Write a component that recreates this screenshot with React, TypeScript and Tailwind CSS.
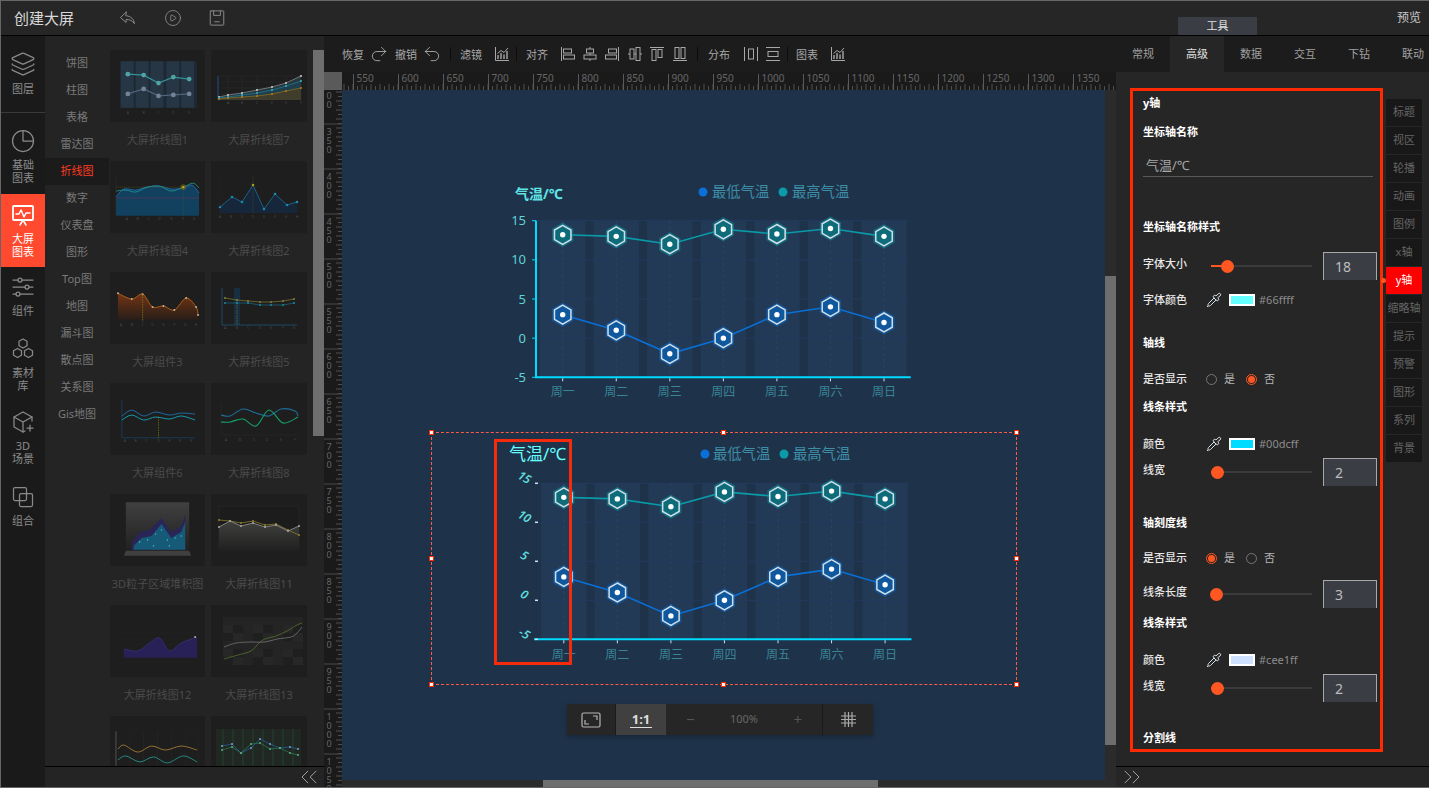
import { Pipette, Layers, CirclePlay, ChevronsLeft, ChevronsRight, Undo2, Redo2 } from 'lucide-react';

type Pt = [number, number];

const smooth = (pts: Pt[]) => {
  let d = `M${pts[0][0]} ${pts[0][1]}`;
  for (let i = 0; i < pts.length - 1; i++) {
    const p0 = pts[i - 1] || pts[i];
    const p1 = pts[i];
    const p2 = pts[i + 1];
    const p3 = pts[i + 2] || p2;
    d += ` C${p1[0] + (p2[0] - p0[0]) / 6} ${p1[1] + (p2[1] - p0[1]) / 6} ${p2[0] - (p3[0] - p1[0]) / 6} ${p2[1] - (p3[1] - p1[1]) / 6} ${p2[0]} ${p2[1]}`;
  }
  return d;
};
const straight = (pts: Pt[]) => pts.map((p, i) => `${i ? 'L' : 'M'}${p[0]} ${p[1]}`).join(' ');
const zip = (xs: number[], ys: number[]) => xs.map((x, i) => [x, ys[i]] as Pt);

function Line({ pts, color, w = 1, curve, dot }: { pts: Pt[]; color: string; w?: number; curve?: boolean; dot?: string }) {
  return (
    <g>
      <path d={curve ? smooth(pts) : straight(pts)} fill="none" stroke={color} strokeWidth={w} />
      {dot && pts.map((p, i) => <circle key={i} cx={p[0]} cy={p[1]} r="1" fill={dot} />)}
    </g>
  );
}

function Area({ pts, base, fill, curve }: { pts: Pt[]; base: number; fill: string; curve?: boolean }) {
  const d = `${curve ? smooth(pts) : straight(pts)} L${pts[pts.length - 1][0]} ${base} L${pts[0][0]} ${base} Z`;
  return <path d={d} fill={fill} />;
}

function Letters({ xs, y, text }: { xs: number[]; y: number; text: string }) {
  return (
    <g fontSize="3.5" fill="#555">
      {xs.map((x, i) => <text key={i} x={x} y={y} textAnchor="middle">{text[i]}</text>)}
    </g>
  );
}

const cards: { name: string; art: React.ReactNode }[] = [
  {
    name: '大屏折线图1',
    art: (
      <g>
        <rect x="10" y="11" width="78" height="47" fill="#1f2c38" />
        {[11, 26, 41, 57, 72].map((x) => <rect key={x} x={x} y="11" width="13" height="47" fill="#2a3d50" />)}
        <Line pts={zip([18, 34, 49, 64, 80], [24, 25, 33, 27, 29])} color="#35b4b8" w={1.2} />
        <Line pts={zip([18, 34, 49, 64, 80], [44, 39, 46, 45, 44])} color="#5d7898" w={1.2} />
        {[[18, 24], [34, 25], [49, 33], [64, 27], [80, 29]].map((p) => <circle key={p[0]} cx={p[0]} cy={p[1]} r="2.4" fill="#5fc9c9" />)}
        {[[18, 44], [34, 39], [49, 46], [64, 45], [80, 44]].map((p) => <circle key={p[0]} cx={p[0]} cy={p[1]} r="2.4" fill="#8d9fbb" />)}
        <Letters xs={[18, 34, 49, 64, 80]} y={64} text="ABCDE" />
      </g>
    ),
  },
  {
    name: '大屏折线图7',
    art: (
      <g>
        {[17, 31, 46, 61, 75, 90].map((x) => <line key={x} x1={x} y1="26" x2={x} y2="50" stroke="#333" strokeWidth=".5" />)}
        {[26, 32, 38, 44].map((y) => <line key={y} x1="7" y1={y} x2="90" y2={y} stroke="#333" strokeWidth=".5" />)}
        <line x1="7" y1="26" x2="7" y2="50" stroke="#1d5fa8" />
        <Area pts={zip([8, 17, 31, 46, 61, 75, 90], [47, 45, 43, 40, 37, 33, 26])} base={50} fill="#2c3e45" />
        <Area pts={zip([8, 17, 31, 46, 61, 75, 90], [48, 47, 45, 43, 40, 36, 31])} base={50} fill="#1f4a5c" />
        <Area pts={zip([8, 17, 31, 46, 61, 75, 90], [49, 48, 47, 46, 44, 41, 38])} base={50} fill="#4a4630" />
        <Line pts={zip([8, 17, 31, 46, 61, 75, 90], [47, 45, 43, 40, 37, 33, 26])} color="#a9b9bd" w={0.7} dot="#fff" />
        <Line pts={zip([8, 17, 31, 46, 61, 75, 90], [48, 47, 45, 43, 40, 36, 31])} color="#1e9cc0" w={0.7} dot="#3ed3ec" />
        <Line pts={zip([8, 17, 31, 46, 61, 75, 90], [49, 48, 47, 46, 44, 41, 38])} color="#b68a1f" w={0.7} dot="#e09a16" />
        <Letters xs={[17, 31, 46, 61, 75, 90]} y={54} text="ABCDEF" />
      </g>
    ),
  },
  {
    name: '大屏折线图4',
    art: (
      <g>
        <Area pts={zip([6, 14, 26, 37, 50, 62, 74, 83, 90], [36, 28, 29, 26, 25, 28, 27, 24, 32])} base={55} fill="#0e4c70" curve />
        <Line pts={zip([6, 14, 26, 37, 50, 62, 74, 83, 90], [36, 28, 29, 26, 25, 28, 27, 24, 32])} color="#2284e6" w={0.9} curve />
        <Line pts={zip([6, 16, 26, 38, 50, 62, 74, 84, 90], [30, 29, 31, 26, 25, 30, 26, 22, 27])} color="#21b0a6" w={0.9} curve />
        <line x1="6" y1="26" x2="74" y2="26" stroke="#8a7f1c" strokeWidth=".5" strokeDasharray="1 1" />
        <line x1="6" y1="37" x2="90" y2="37" stroke="#a02f6a" strokeWidth=".5" />
        <line x1="74" y1="26" x2="74" y2="55" stroke="#3c7a50" strokeWidth=".5" strokeDasharray="1 1" />
        <circle cx="74" cy="26" r="3" fill="#8f7b16" opacity=".6" />
        <circle cx="74" cy="26" r="1.2" fill="#f4d316" />
        <line x1="6" y1="16" x2="6" y2="55" stroke="#3a3a2a" strokeWidth=".5" />
        <Letters xs={[17, 28, 39, 50, 62, 74, 85]} y={59} text="ABCDEFG" />
      </g>
    ),
  },
  {
    name: '大屏折线图2',
    art: (
      <g>
        <Area pts={zip([9, 21, 31, 42, 53, 64, 76, 86], [46, 36, 41, 24, 48, 33, 44, 41])} base={52} fill="#152a44" />
        <Line pts={zip([9, 21, 31, 42, 53, 64, 76, 86], [46, 36, 41, 24, 48, 33, 44, 41])} color="#1a87b8" w={0.8} />
        {zip([9, 21, 31, 53, 64, 76, 86], [46, 36, 41, 48, 33, 44, 41]).map((p) => <circle key={p[0]} cx={p[0]} cy={p[1]} r="1.3" fill="#18a7d9" />)}
        <line x1="42" y1="15" x2="42" y2="52" stroke="#4a4a30" strokeWidth=".5" />
        <circle cx="42" cy="24" r="1.3" fill="#c5c216" />
        <line x1="9" y1="15" x2="9" y2="52" stroke="#333" strokeWidth=".5" strokeDasharray="1 2" />
        <Letters xs={[9, 20, 31, 42, 53, 64, 75, 86]} y={57} text="ABCDEFGH" />
      </g>
    ),
  },
  {
    name: '大屏组件3',
    art: (
      <g>
        <defs>
          <linearGradient id="or" x1="0" y1="0" x2="0" y2="1">
            <stop offset="0" stopColor="#8d3c12" />
            <stop offset="1" stopColor="#2a1e18" />
          </linearGradient>
        </defs>
        <Area pts={zip([8, 22, 33, 43, 54, 65, 77, 87, 89], [21, 27, 22, 35, 34, 38, 26, 35, 43])} base={48} fill="url(#or)" curve />
        <Line pts={zip([8, 22, 33, 43, 54, 65, 77, 87, 89], [21, 27, 22, 35, 34, 38, 26, 35, 43])} color="#ee7a12" w={0.9} curve dot="#eedcc0" />
        <line x1="33" y1="22" x2="33" y2="50" stroke="#a89018" strokeWidth=".8" strokeDasharray="1.5 1" />
        <Letters xs={[11, 22, 33, 43, 54, 65, 76, 87]} y={54} text="ABCDEFGH" />
      </g>
    ),
  },
  {
    name: '大屏折线图5',
    art: (
      <g>
        <rect x="23" y="16" width="6" height="37" fill="#16344a" />
        <line x1="11" y1="16" x2="11" y2="53" stroke="#1a6fa0" strokeWidth=".7" />
        <line x1="11" y1="53" x2="86" y2="53" stroke="#1a6fa0" strokeWidth=".7" />
        <line x1="26" y1="28" x2="26" y2="53" stroke="#9b8a1c" strokeWidth=".7" strokeDasharray="1.5 1" />
        <Line pts={zip([14, 26, 37, 49, 60, 72, 83], [26, 28, 29, 30, 30, 29, 27])} color="#a19a3a" w={0.7} dot="#9c9a50" />
        <Line pts={zip([14, 26, 37, 49, 60, 72, 83], [31, 31, 31, 33, 33, 33, 31])} color="#1784a8" w={0.7} dot="#1ea2c4" />
        <Letters xs={[14, 26, 37, 49, 60, 72, 83]} y={57} text="ABCDEFG" />
      </g>
    ),
  },
  {
    name: '大屏组件6',
    art: (
      <g>
        <line x1="12" y1="17" x2="12" y2="55" stroke="#174f7a" strokeWidth=".8" />
        <line x1="12" y1="55" x2="86" y2="55" stroke="#174f7a" strokeWidth=".8" />
        <line x1="49" y1="34" x2="49" y2="55" stroke="#8b8a14" strokeWidth=".8" strokeDasharray="1.5 1" />
        <Line pts={zip([12, 22, 34, 46, 60, 72, 86], [33, 27, 33, 29, 32, 30, 31])} color="#1e7fc9" w={1} curve />
        <Line pts={zip([12, 22, 34, 46, 60, 72, 86], [37, 32, 37, 34, 36, 33, 37])} color="#12c0d8" w={1} curve />
        <Letters xs={[15, 26, 37, 49, 60, 71, 82]} y={59} text="ABCDEFG" />
      </g>
    ),
  },
  {
    name: '大屏折线图8',
    art: (
      <g>
        <line x1="10" y1="20" x2="10" y2="52" stroke="#333" strokeWidth=".5" />
        <line x1="10" y1="52" x2="88" y2="52" stroke="#333" strokeWidth=".5" />
        <Line pts={zip([10, 19, 32, 45, 58, 70, 84, 87], [32, 33, 26, 30, 33, 26, 28, 33])} color="#1b86bd" w={1.1} curve />
        <Line pts={zip([10, 19, 32, 45, 58, 72, 87], [39, 39, 36, 43, 27, 40, 34])} color="#12c77d" w={1.1} curve />
        <Letters xs={[15, 29, 43, 56, 70, 84]} y={58} text="ABCDEF" />
      </g>
    ),
  },
  {
    name: '3D粒子区域堆积图',
    art: (
      <g>
        <defs>
          <linearGradient id="d3" x1="0" y1="0" x2="0" y2="1">
            <stop offset="0" stopColor="#4a4a4a" />
            <stop offset="1" stopColor="#222" />
          </linearGradient>
        </defs>
        <rect x="16" y="8" width="64" height="49" fill="url(#d3)" />
        <path d="M16 57 L80 57 L82 62 L14 62 Z" fill="#4a4a4a" />
        <Area pts={zip([22, 30, 40, 52, 62, 72, 76], [48, 38, 36, 24, 38, 32, 20])} base={56} fill="#2e2768" />
        <Area pts={zip([24, 32, 42, 52, 62, 72, 76], [52, 44, 42, 30, 44, 38, 28])} base={56} fill="#146c90" />
        {[[30, 48], [38, 46], [46, 40], [52, 36], [58, 46], [66, 44], [72, 42], [44, 52], [60, 52]].map((p) => (
          <circle key={p[0] * p[1]} cx={p[0]} cy={p[1]} r=".8" fill="#3fe0e4" />
        ))}
      </g>
    ),
  },
  {
    name: '大屏折线图11',
    art: (
      <g>
        <defs>
          <linearGradient id="gr" x1="0" y1="0" x2="0" y2="1">
            <stop offset="0" stopColor="#4a4a46" />
            <stop offset="1" stopColor="#222" />
          </linearGradient>
        </defs>
        <rect x="8" y="12" width="80" height="44" fill="#1c1c1c" stroke="#333" strokeWidth=".5" />
        <Area pts={zip([8, 19, 30, 42, 54, 65, 77, 88], [33, 27, 32, 29, 33, 31, 37, 32])} base={56} fill="url(#gr)" />
        <Line pts={zip([8, 19, 30, 42, 54, 65, 77, 88], [26, 27, 29, 27, 31, 30, 36, 41])} color="#a8962e" w={0.8} dot="#b09a2e" />
        <Line pts={zip([8, 19, 30, 42, 54, 65, 77, 88], [33, 27, 32, 29, 33, 31, 37, 32])} color="#b5b5b5" w={0.8} dot="#ccc" />
      </g>
    ),
  },
  {
    name: '大屏折线图12',
    art: (
      <g>
        {[8, 14, 20, 26, 32, 38, 44].map((y) => <line key={y} x1="10" y1={y + 14} x2="88" y2={y + 14} stroke="#2c2c2c" strokeWidth=".4" />)}
        <Area pts={zip([14, 28, 40, 50, 60, 72, 88], [44, 46, 38, 33, 46, 38, 32])} base={53} fill="#2a2368" curve />
        <Line pts={zip([14, 28, 40, 50, 60, 72, 88], [44, 46, 38, 33, 46, 38, 32])} color="#4a3ea8" w={0.6} curve />
        <circle cx="86" cy="32" r="1" fill="#ddd" />
      </g>
    ),
  },
  {
    name: '大屏折线图13',
    art: (
      <g>
        {Array.from({ length: 6 }).map((_, r) =>
          Array.from({ length: 8 }).map((_, c) => (
            <rect key={`${r}-${c}`} x={12 + c * 10} y={12 + r * 8} width="10" height="8" fill={['#262626', '#2a2a2a', '#202020'][(r * 7 + c * 3 + r * c) % 3]} />
          )),
        )}
        <Line pts={zip([13, 27, 40, 48, 54, 65, 76, 86, 91], [54, 50, 46, 38, 34, 31, 26, 20, 18])} color="#6f9a34" w={0.7} curve />
        <Line pts={zip([13, 25, 40, 54, 66, 80, 86, 91], [42, 38, 37, 37, 34, 32, 28, 22])} color="#9a9a9a" w={0.7} curve />
      </g>
    ),
  },
  {
    name: '',
    art: (
      <g>
        <line x1="6" y1="15" x2="6" y2="50" stroke="#aaa" strokeWidth=".5" />
        {[20, 34, 48, 62, 76, 89].map((x) => <line key={x} x1={x} y1="16" x2={x} y2="50" stroke="#333" strokeWidth=".4" />)}
        <Line pts={zip([8, 14, 28, 42, 56, 72, 88], [33, 29, 36, 30, 34, 30, 34])} color="#b98a3a" w={1} curve />
        <Line pts={zip([8, 16, 30, 44, 58, 74, 88], [44, 40, 46, 41, 47, 40, 46])} color="#25a8a0" w={1} curve />
      </g>
    ),
  },
  {
    name: '',
    art: (
      <g>
        <rect x="5" y="13" width="85" height="38" fill="#222b25" />
        {[12, 22, 32, 42, 52, 62, 72, 82].map((x) => <line key={x} x1={x} y1="13" x2={x} y2="51" stroke="#274a36" strokeWidth="1" />)}
        <Line pts={zip([11, 21, 30, 40, 49, 59, 69, 79, 87], [30, 28, 37, 32, 23, 28, 32, 31, 33])} color="#2a6fb8" w={0.8} dot="#8ec6f0" />
        <Line pts={zip([11, 21, 30, 40, 49, 59, 69, 79, 87], [34, 31, 37, 28, 27, 33, 32, 37, 39])} color="#2c8f64" w={0.8} dot="#6fd39a" />
      </g>
    ),
  },
];

function Cards() {
  return (
    <div className="grid grid-cols-[95px_96px] gap-x-[6px] pt-[14px] ml-px">
      {cards.map((c, i) => (
        <div key={i} className="h-[111px]">
          <svg viewBox="0 0 96 72" className="w-full h-[72px] bg-[#1e1e1e] block"><g opacity=".78">{c.art}</g></svg>
          {c.name && <div className="h-[36px] flex items-center justify-center text-[11px] text-[#4b4b4b] whitespace-nowrap">{c.name}</div>}
        </div>
      ))}
    </div>
  );
}

const IconS = ({ children, size = 24, box = 24 }: { children: React.ReactNode; size?: number; box?: number }) => (
  <svg width={size} height={size} viewBox={`0 0 ${box} ${box}`} fill="none" stroke="currentColor" strokeWidth="1.25" strokeLinecap="round" strokeLinejoin="round">
    {children}
  </svg>
);

const railItems = [
  { lines: ['图层'], cls: 'h-[77px] pt-[15px] border-b border-[#3a3a3a]', icon: <Layers size={26} strokeWidth={1.2} /> },
  { lines: ['基础', '图表'], cls: 'h-[81px] pt-[16px]', icon: <IconS><circle cx="12" cy="12" r="10.5" /><path d="M12 1.5V12H22.5" /></IconS> },
  {
    lines: ['大屏', '图表'],
    cls: 'h-[73px] pt-[9px] bg-[#ff4a2f] text-white',
    icon: (
      <IconS>
        <rect x="2" y="3" width="20" height="14" rx="1" strokeWidth="1.8" />
        <path d="M5 11h3l2-4 3 7 2-4h4M9 22l3-5 3 5" strokeWidth="1.5" />
      </IconS>
    ),
  },
  {
    lines: ['组件'],
    cls: 'h-[67px] pt-[8px]',
    icon: (
      <IconS>
        <path d="M2 5h5M11 5h11M2 12h12M18 12h4M2 19h3M9 19h13" />
        <circle cx="9" cy="5" r="2" /><circle cx="16" cy="12" r="2" /><circle cx="7" cy="19" r="2" />
      </IconS>
    ),
  },
  {
    lines: ['素材', '库'],
    cls: 'h-[75px] pt-[3px]',
    icon: (
      <IconS>
        <path d="M12 2l4 2.2v4.6L12 11 8 8.8V4.2z" />
        <path d="M6.5 11.5l4 2.2v4.6l-4 2.2-4-2.2v-4.6z" />
        <path d="M17.5 11.5l4 2.2v4.6l-4 2.2-4-2.2v-4.6z" />
      </IconS>
    ),
  },
  {
    lines: ['3D', '场景'],
    cls: 'h-[75px] pt-px',
    icon: (
      <IconS>
        <path d="M21 11V7L12 2 3 7v10l9 5 2-1" />
        <path d="M3 7l9 5 9-5M12 12v10" />
        <path d="M19 15v6M16 18h6" />
      </IconS>
    ),
  },
  {
    lines: ['组合'],
    cls: 'h-[60px] pt-px',
    icon: (
      <IconS>
        <rect x="2.5" y="2.5" width="13" height="13" rx="1.5" />
        <rect x="8.5" y="8.5" width="13" height="13" rx="1.5" />
      </IconS>
    ),
  },
];

const categories = ['饼图', '柱图', '表格', '雷达图', '折线图', '数字', '仪表盘', '图形', 'Top图', '地图', '漏斗图', '散点图', '关系图', 'Gis地图'];

function Tool({ children }: { children: React.ReactNode }) {
  return <svg width="16" height="16" viewBox="0 0 16 16" fill="none" stroke="#a8a8a8" strokeWidth="1" className="shrink-0 block">{children}</svg>;
}

const ChartMini = () => (
  <Tool>
    <path d="M1.5 1v13.5H15" />
    <path d="M4 13V9M7 13V7M10 13V8.5M13 13V5" strokeWidth="1.4" />
    <path d="M3.5 7.5L7 4.5l3 2L14 2" />
  </Tool>
);

const Sep = ({ cls }: { cls: string }) => <span className={`w-px h-[14px] bg-[#0c0c0c] shrink-0 ${cls}`} />;

function Toolbar() {
  const t = 'text-[11px] text-[#a8a8a8] whitespace-nowrap w-[22px] shrink-0 leading-none';
  return (
    <div className="h-[36px] bg-[#1c1c1c] flex items-center pl-[18px]">
      <span className={t}>恢复</span>
      <span className="ml-[5px] text-[#b8b8b8]"><Redo2 size={20} strokeWidth={1} /></span>
      <span className={`${t} ml-[6px]`}>撤销</span>
      <span className="ml-[5px] text-[#b8b8b8]"><Undo2 size={20} strokeWidth={1} /></span>
      <Sep cls="ml-[8px]" />
      <span className={`${t} ml-[9px]`}>滤镜</span>
      <span className="ml-[12px]"><ChartMini /></span>
      <Sep cls="ml-[6px]" />
      <span className={`${t} ml-[9px]`}>对齐</span>
      <span className="ml-[12px]"><Tool><path d="M1.5 1v14" /><rect x="3.5" y="3" width="8" height="4" /><rect x="3.5" y="9" width="11" height="4" /></Tool></span>
      <span className="ml-[6px]"><Tool><path d="M8 1v2M8 7v2M8 13v2" /><rect x="4.5" y="3" width="7" height="4" /><rect x="2" y="9" width="12" height="4" /></Tool></span>
      <span className="ml-[6px]"><Tool><path d="M14.5 1v14" /><rect x="4.5" y="3" width="8" height="4" /><rect x="1.5" y="9" width="11" height="4" /></Tool></span>
      <span className="ml-[7px]"><Tool><path d="M1 8h2M7 8h2M13 8h2" /><rect x="3" y="3" width="4" height="10" /><rect x="9" y="1.5" width="4" height="13" /></Tool></span>
      <span className="ml-[6px]"><Tool><path d="M1 1.5h14" /><rect x="3" y="3.5" width="4" height="11" /><rect x="9" y="3.5" width="4" height="8" /></Tool></span>
      <span className="ml-[7px]"><Tool><path d="M1 14.5h14" /><rect x="3" y="1.5" width="4" height="11" /><rect x="9" y="1.5" width="4" height="11" /></Tool></span>
      <Sep cls="ml-[9px]" />
      <span className={`${t} ml-[10px]`}>分布</span>
      <span className="ml-[13px]"><Tool><path d="M1.5 1v14M14.5 1v14" /><rect x="5.5" y="3" width="5" height="10" /></Tool></span>
      <span className="ml-[6px]"><Tool><path d="M1 1.5h14M1 14.5h14" /><rect x="3" y="5.5" width="10" height="5" /></Tool></span>
      <Sep cls="ml-[6px]" />
      <span className={`${t} ml-[8px]`}>图表</span>
      <span className="ml-[12px]"><ChartMini /></span>
    </div>
  );
}

function HRuler() {
  const ticks = Array.from({ length: 172 }, (_, i) => i);
  const majors = Array.from({ length: 17 }, (_, i) => i);
  return (
    <svg width="774" height="18" className="block">
      {ticks.map((i) => {
        const x = 2 + i * 4.5;
        return <line key={i} x1={x} y1={i % 2 ? 14 : 12} x2={x} y2="18" stroke="#4e4e4e" />;
      })}
      {majors.map((i) => {
        const x = 11.5 + i * 45;
        return (
          <g key={i}>
            <line x1={x} y1="2" x2={x} y2="18" stroke="#5a5a5a" />
            <text x={x + 3} y="10" fontSize="10" fill="#666">{550 + i * 50}</text>
          </g>
        );
      })}
    </svg>
  );
}

function VRuler() {
  const ticks = Array.from({ length: 155 }, (_, i) => i);
  const majors = Array.from({ length: 16 }, (_, i) => i);
  return (
    <svg width="18" height="698" className="block bg-[#1a1a1a]">
      {ticks.map((i) => {
        const y = 2 + i * 4.5;
        return <line key={i} x1={i % 2 ? 14 : 12} y1={y} x2="18" y2={y} stroke="#4e4e4e" />;
      })}
      {majors.map((i) => {
        const y = -11 + i * 45;
        return (
          <g key={i}>
            <line x1="0" y1={y} x2="18" y2={y} stroke="#4a4a4a" />
            {String(300 + i * 50).split('').map((d, k) => (
              <text key={k} x="5" y={y + 11 + k * 9} fontSize="9" fill="#666" textAnchor="middle">{d}</text>
            ))}
          </g>
        );
      })}
    </svg>
  );
}

const LOW = [3, 1, -2, 0, 3, 4, 2];
const HIGH = [13.2, 13, 12, 13.9, 13.3, 14, 13];
const DAYS = ['周一', '周二', '周三', '周四', '周五', '周六', '周日'];

function hex(cx: number, cy: number, r: number) {
  return [0, 1, 2, 3, 4, 5]
    .map((i) => {
      const a = (Math.PI / 3) * i - Math.PI / 2;
      return `${cx + r * Math.cos(a)},${cy + r * Math.sin(a)}`;
    })
    .join(' ');
}

function Series({ xs, vals, y, color, fill }: { xs: number[]; vals: number[]; y: (v: number) => number; color: string; fill: string }) {
  return (
    <g>
      <polyline points={xs.map((x, i) => `${x},${y(vals[i])}`).join(' ')} fill="none" stroke={color} strokeWidth="1.6" />
      {xs.map((x, i) => (
        <g key={x}>
          <polygon points={hex(x, y(vals[i]), 11.5)} fill={color} opacity=".5" stroke={color} strokeWidth="1.2" strokeLinejoin="round" />
          <polygon points={hex(x, y(vals[i]), 9.5)} fill={fill} stroke="#d0e0e8" strokeWidth="1.5" />
          <circle cx={x} cy={y(vals[i])} r="2.7" fill="#fff" />
        </g>
      ))}
    </g>
  );
}

function TempChart({ second }: { second?: boolean }) {
  const x0 = second ? 563.8 : 562.7;
  const xs = DAYS.map((_, i) => x0 + i * 53.55);
  const top = second ? 483.3 : 220.7;
  const bot = second ? 639.3 : 377.3;
  const y = (v: number) => bot - ((v + 5) / 20) * (bot - top);
  const right = second ? 911.5 : 910.7;
  const left = second ? 535 : 536;
  const legendY = second ? 454 : 192;
  const shift = second ? 1 : 0;
  return (
    <>
      {xs.map((x) => <rect key={x} x={x - 22.7} y={top} width="45.4" height={bot - top} fill="#223a55" />)}
      {[15, 10, 5, 0].map((v) => <line key={v} x1={second ? 540 : left} y1={y(v)} x2={right - 3} y2={y(v)} stroke="#233a5f" strokeWidth="1" />)}
      {xs.map((x) => <line key={x} x1={x} y1={top} x2={x} y2={bot} stroke="#2a4468" strokeDasharray="3 3" />)}
      {!second && <line x1={left} y1={top} x2={left} y2={bot} stroke="#00dcff" strokeWidth="2" />}
      <line x1={left - 1} y1={bot} x2={right} y2={bot} stroke="#00dcff" strokeWidth="2" />
      {xs.map((x) => <line key={x} x1={x} y1={bot + 1} x2={x} y2={bot + 4} stroke="#cee1ff" />)}
      {[15, 10, 5, 0, -5].map((v) => (
        <g key={v}>
          <line x1={second ? 535 : 532} y1={y(v)} x2={second ? 538 : 536} y2={y(v)} stroke={second ? '#cee1ff' : '#00dcff'} strokeWidth={second ? 1.5 : 1} />
          {second ? (
            <text x="524" y={y(v) - 5} fontSize="12" fontWeight="600" fill="#5fdcdc" fontStyle="italic" textAnchor="middle" transform={`rotate(30 524 ${y(v) - 5})`} dominantBaseline="middle">{v}</text>
          ) : (
            <text x="526" y={y(v) + 4.5} fontSize="13" fill="#62d2d6" textAnchor="end">{v}</text>
          )}
        </g>
      ))}
      {xs.map((x, i) => <text key={x} x={x} y={bot + (second ? 20 : 19)} fontSize="12" fill="#3a8497" textAnchor="middle">{DAYS[i]}</text>)}
      <Series xs={xs} vals={HIGH} y={y} color="#0a9aa8" fill="#0e6c7a" />
      <Series xs={xs} vals={LOW} y={y} color="#0a6fd6" fill="#10589e" />
      <text x={second ? 509 : 515} y={second ? 460 : 199} fontSize={second ? 17 : 14} fontWeight={second ? 400 : 700} fill={second ? '#66ffff' : '#5fe4e6'}>气温/℃</text>
      <circle cx={703 + shift * 2} cy={legendY} r="4.5" fill="#0a6fd6" />
      <text x={712 + shift} y={legendY + 5} fontSize="14.3" fill="#3f8ea8">最低气温</text>
      <circle cx={783 + shift} cy={legendY} r="4.5" fill="#0a9aa8" />
      <text x={792 + shift} y={legendY + 5} fontSize="14.3" fill="#3f8ea8">最高气温</text>
    </>
  );
}

function Handle({ cls }: { cls: string }) {
  return <span className={`absolute w-[5px] h-[5px] bg-white border border-[#ff2a00] ${cls}`} />;
}

function ZoomBar() {
  return (
    <div className="absolute left-[225px] top-[614px] w-[306px] h-[31px] bg-[#262626] flex items-center text-[#777] shadow-[0_2px_6px_rgba(0,0,0,.25)]">
      <div className="w-[49px] h-full flex items-center justify-center border-r border-[#1a1a1a] text-[#b5b5b5]">
        <svg width="20" height="16" viewBox="0 0 20 16" fill="none" stroke="currentColor" strokeWidth="1.2">
          <rect x="1" y="1" width="18" height="14" rx="1.5" />
          <path d="M4 8v4h4M16 8V4h-4" />
        </svg>
      </div>
      <div className="w-[50px] h-full flex items-center justify-center bg-[#404040]">
        <span className="text-[13px] font-bold text-[#ddd] border-b border-[#ddd] leading-[15px] px-[2px]">1:1</span>
      </div>
      <div className="w-[157px] h-full flex items-center justify-between px-[20px] border-r border-[#1a1a1a] text-[11px]">
        <span className="text-[15px] text-[#555]">−</span>
        <span className="text-[#666]">100%</span>
        <span className="text-[15px] text-[#555]">+</span>
      </div>
      <div className="flex-1 flex items-center justify-center">
        <svg width="15" height="15" viewBox="0 0 15 15" stroke="#aaa" strokeWidth="1.2">
          <path d="M4 0v15M7.5 0v15M11 0v15M0 4h15M0 7.5h15M0 11h15" />
        </svg>
      </div>
    </div>
  );
}

function Canvas() {
  return (
    <div className="relative flex-1 bg-[#1e3249] overflow-hidden">
      <svg className="absolute left-[150px] top-[90px]" width="430" height="225" viewBox="492 180 430 225"><TempChart /></svg>
      <svg className="absolute left-[150px] top-[350px]" width="430" height="230" viewBox="492 440 430 230"><TempChart second /></svg>
      <div className="absolute left-[89px] top-[342px] w-[586px] h-[253px] border border-dashed border-[#ff5a45]">
        <Handle cls="-left-[3px] -top-[3px]" />
        <Handle cls="left-[289px] -top-[3px]" />
        <Handle cls="-right-[3px] -top-[3px]" />
        <Handle cls="-left-[3px] top-[123px]" />
        <Handle cls="-right-[3px] top-[123px]" />
        <Handle cls="-left-[3px] -bottom-[3px]" />
        <Handle cls="left-[289px] -bottom-[3px]" />
        <Handle cls="-right-[3px] -bottom-[3px]" />
      </div>
      <div className="absolute left-[152px] top-[349px] w-[78px] h-[226px] border-[3px] border-[#f52b0b]" />
      <ZoomBar />
    </div>
  );
}

function Title({ cls, children }: { cls: string; children: React.ReactNode }) {
  return <div className={`h-[20px] flex items-center text-[11px] font-bold text-white ${cls}`}>{children}</div>;
}

function Slider({ value }: { value: number }) {
  return (
    <div className="relative w-[101px] h-[2px] bg-[#3a3a3a] ml-[5px]">
      <div className="absolute left-0 top-0 h-full bg-[#ff5722]" style={{ width: value }} />
      <div className="absolute -top-[5.5px] w-[13px] h-[13px] rounded-full bg-[#ff5722]" style={{ left: value - 6.5 }} />
    </div>
  );
}

function SliderRow({ label, cls, value, num }: { label: string; cls: string; value: number; num: string }) {
  return (
    <div className={`h-[28px] flex items-center ${cls}`}>
      <span className="w-[63px] text-[11px] text-[#e8e8e8] font-medium shrink-0 -translate-y-[2px]">{label}</span>
      <Slider value={value} />
      <div className="ml-[11px] w-[54px] h-[28px] bg-[#3a3d44] border border-b-0 border-[#a8a8a8] flex items-center pl-[11px] text-[14px] text-[#bdbdbd]">{num}</div>
    </div>
  );
}

function ColorRow({ label, cls, color }: { label: string; cls: string; color: string }) {
  return (
    <div className={`h-[20px] flex items-center ${cls}`}>
      <span className="w-[63px] text-[11px] text-[#e8e8e8] font-medium shrink-0">{label}</span>
      <Pipette size={16} strokeWidth={1.4} className="text-[#e6eef5] shrink-0" />
      <span className="ml-[7px] w-[26px] h-[12px] border-2 border-white shrink-0" style={{ background: color }} />
      <span className="ml-[4px] text-[11px] text-[#8d8d8d]">{color}</span>
    </div>
  );
}

function Radio({ on, label }: { on?: boolean; label: string }) {
  return (
    <span className="flex items-center w-[45px] shrink-0">
      <span className={`w-[11px] h-[11px] rounded-full border flex items-center justify-center ${on ? 'border-[#ff5722]' : 'border-[#777]'}`}>
        {on && <span className="w-[7px] h-[7px] rounded-full bg-[#ff5722]" />}
      </span>
      <span className="ml-[7px] text-[11px] text-[#b5b5b5]">{label}</span>
    </span>
  );
}

function RadioRow({ cls, yes }: { cls: string; yes?: boolean }) {
  return (
    <div className={`h-[20px] flex items-center ${cls}`}>
      <span className="w-[63px] text-[11px] text-[#e8e8e8] font-medium shrink-0">是否显示</span>
      <Radio on={yes} label="是" />
      <span className="-ml-[5px]"><Radio on={!yes} label="否" /></span>
    </div>
  );
}

function AxisForm() {
  return (
    <div className="relative w-[253px] h-[664px] border-[3px] border-[#ff2a00] pl-[10px] shrink-0">
      <Title cls="mt-[2px]">y轴</Title>
      <Title cls="mt-[9px]">坐标轴名称</Title>
      <div className="mt-[14px] h-[21px] w-[230px] border-b border-[#5a5a5a] pl-[3px] flex items-center text-[13px] text-[#a8a8a8]">气温/℃</div>
      <Title cls="mt-[40px]">坐标轴名称样式</Title>
      <SliderRow label="字体大小" cls="mt-[15px]" value={16} num="18" />
      <ColorRow label="字体颜色" cls="mt-[10px]" color="#66ffff" />
      <Title cls="mt-[23px]">轴线</Title>
      <RadioRow cls="mt-[16px]" />
      <Title cls="mt-[8px]">线条样式</Title>
      <ColorRow label="颜色" cls="mt-[17px]" color="#00dcff" />
      <SliderRow label="线宽" cls="mt-[4px]" value={6} num="2" />
      <Title cls="mt-[27px]">轴刻度线</Title>
      <RadioRow cls="mt-[15px]" yes />
      <SliderRow label="线条长度" cls="mt-[12px]" value={5} num="3" />
      <Title cls="mt-[5px]">线条样式</Title>
      <ColorRow label="颜色" cls="mt-[17px]" color="#cee1ff" />
      <SliderRow label="线宽" cls="mt-[4px]" value={6} num="2" />
      <Title cls="mt-[26px]">分割线</Title>
      <span className="absolute -right-[6px] top-[187px] w-[5px] h-[5px] rounded-full bg-[#ff5722] z-10" />
    </div>
  );
}

const sideTabs = ['标题', '视区', '轮播', '动画', '图例', 'x轴', 'y轴', '缩略轴', '提示', '预警', '图形', '系列', '背景'];
const topTabs = ['常规', '高级', '数据', '交互', '下钻', '联动'];

export default function App() {
  return (
    <div className="w-[1429px] h-[788px] overflow-hidden bg-[#262626] border-t border-l border-b border-[#666] flex flex-col [font-family:'Noto_Sans','Noto_Sans_CJK_SC',sans-serif]">
      <header className="h-[35px] shrink-0 bg-[#262626] border-b border-black flex items-center pl-[13px] text-[#8f8f8f]">
        <span className="w-[64px] text-[15px] text-[#d8d8d8] whitespace-nowrap shrink-0">创建大屏</span>
        <span className="ml-[41px] shrink-0">
          <IconS size={18}><path d="M9.5 4L2 11.5l7.5 6.5v-4c4.5-.3 8.5 1.5 11 5.5-.5-6-4.5-10-11-10.5z" /></IconS>
        </span>
        <CirclePlay size={18} strokeWidth={1.1} className="ml-[27px] shrink-0" />
        <span className="ml-[26px] shrink-0">
          <IconS size={18}><rect x="3" y="2.5" width="18" height="19" rx="1" /><path d="M7.5 2.5v6h9v-6M9 17h6" /></IconS>
        </span>
        <span className="ml-[952px] self-end mt-auto w-[79px] h-[18px] bg-[#3a3d44] text-[11px] text-[#e0e0e0] flex items-center justify-center shrink-0">工具</span>
        <span className="ml-[140px] self-start mt-[9px] text-[12px] leading-[16px] text-[#c8c8c8] whitespace-nowrap">预览</span>
      </header>

      <div className="flex-1 flex min-h-0">
        <nav className="w-[44px] shrink-0 bg-[#1a1a1a]">
          {railItems.map((r) => (
            <div key={r.lines.join('')} className={`flex flex-col items-center text-[#8a8a8a] ${r.cls}`}>
              {r.icon}
              <div className="mt-[5px] text-[11px] leading-[13px] text-center">
                {r.lines.map((l) => <div key={l}>{l}</div>)}
              </div>
            </div>
          ))}
        </nav>

        <aside className="w-[279px] shrink-0 bg-[#242424] flex flex-col">
          <div className="flex-1 flex min-h-0 overflow-hidden">
            <div className="w-[64px] shrink-0 pt-[14px]">
              {categories.map((c) => (
                <div key={c} className={`h-[27px] flex items-center justify-center text-[11px] whitespace-nowrap ${c === '折线图' ? 'bg-[#1b1b1b] text-[#ff3a22]' : 'text-[#7a7a7a]'}`}>
                  {c}
                </div>
              ))}
            </div>
            <div className="w-[204px] shrink-0"><Cards /></div>
            <div className="w-[11px] shrink-0 pt-[14px]"><div className="h-[386px] bg-[#6e6e6e]" /></div>
          </div>
          <div className="h-[21px] shrink-0 border-t border-black flex items-center justify-end pr-px text-[#aaa] overflow-hidden">
            <ChevronsLeft size={28} strokeWidth={0.8} className="shrink-0" />
          </div>
        </aside>

        <main className="w-[792px] shrink-0 flex flex-col min-h-0">
          <Toolbar />
          <div className="h-[18px] shrink-0 flex bg-[#1a1a1a]">
            <div className="w-[18px] bg-[#5a5a5a]" />
            <HRuler />
          </div>
          <div className="flex-1 flex min-h-0">
            <VRuler />
            <div className="flex-1 flex flex-col min-w-0">
              <div className="flex-1 flex min-h-0">
                <Canvas />
                <div className="w-[11px] bg-[#2b2b2b] shrink-0"><div className="mt-[186px] h-[469px] bg-[#6e6e6e]" /></div>
              </div>
              <div className="h-[7px] bg-[#2b2b2b] shrink-0"><div className="ml-[201px] w-[335px] h-full bg-[#6e6e6e]" /></div>
            </div>
          </div>
        </main>

        <section className="flex-1 flex flex-col min-w-0 overflow-hidden">
          <div className="h-[36px] shrink-0 bg-[#1c1c1c] flex">
            {topTabs.map((t) => (
              <div key={t} className={`w-[54px] shrink-0 flex items-center justify-center text-[11px] ${t === '高级' ? 'bg-[#262626] text-[#e0e0e0]' : 'text-[#a0a0a0]'}`}>
                {t}
              </div>
            ))}
          </div>
          <div className="flex-1 flex pl-[14px] pt-[16px] min-h-0">
            <AxisForm />
            <div className="ml-[3px] pt-[11px] w-[36px] shrink-0">
              {sideTabs.map((t) => (
                <div key={t} className={`h-[27px] mb-px flex items-center justify-center text-[11px] whitespace-nowrap ${t === 'y轴' ? 'bg-[#ff0000] text-white' : 'bg-[#181818] text-[#666]'}`}>
                  {t}
                </div>
              ))}
            </div>
          </div>
          <div className="h-[21px] shrink-0 border-t border-black flex items-center pl-[2px] text-[#aaa] overflow-hidden">
            <ChevronsRight size={28} strokeWidth={0.8} className="shrink-0" />
          </div>
        </section>
      </div>
    </div>
  );
}
